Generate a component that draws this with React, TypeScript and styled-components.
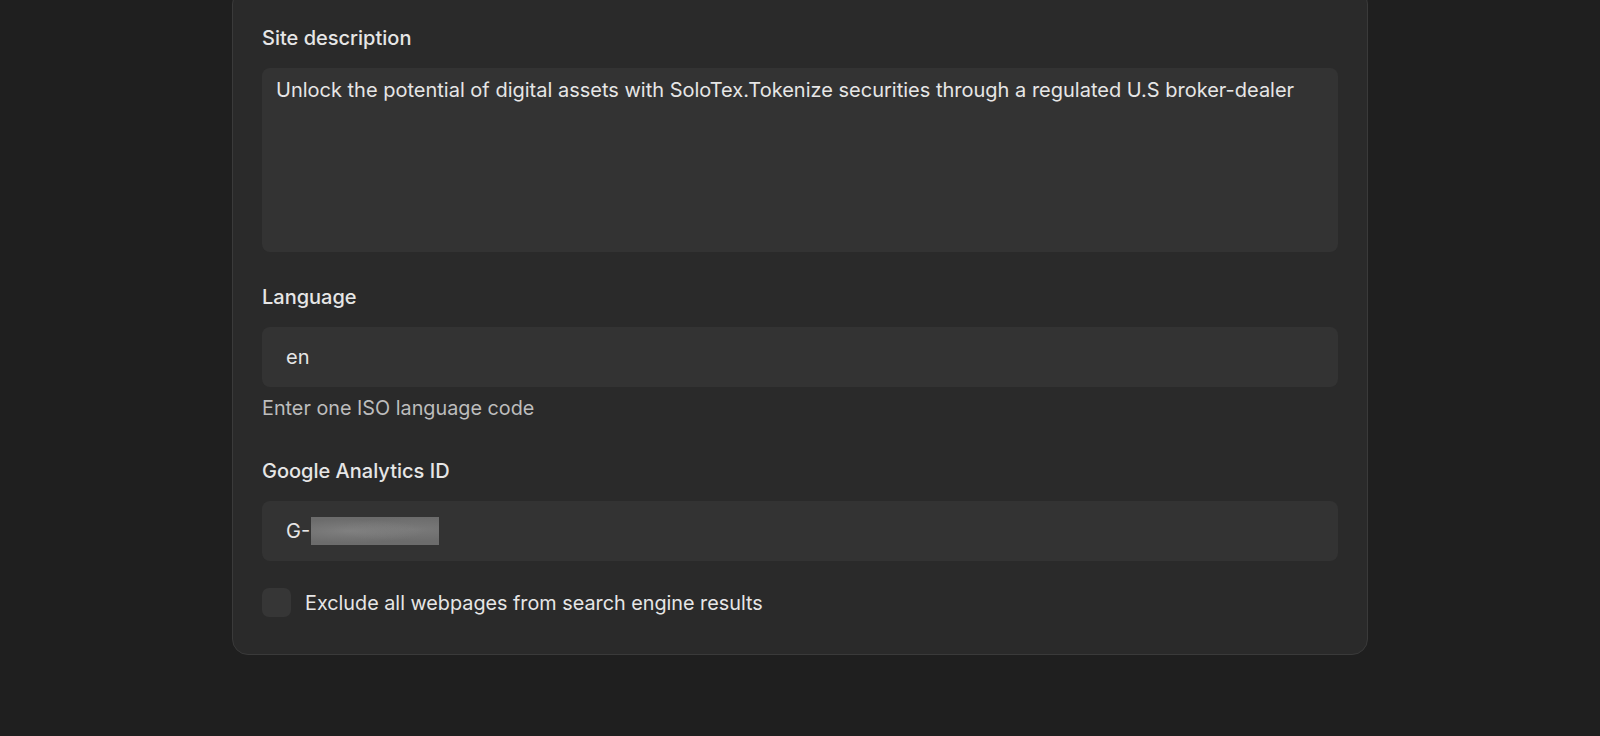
import React from "react";
import styled, { createGlobalStyle } from "styled-components";

const Global = createGlobalStyle`
  html, body {
    margin: 0;
    padding: 0;
    background: #1f1f1f;
    height: 100%;
    overflow: hidden;
  }
  * { box-sizing: border-box; }
`;

const Page = styled.div`
  display: flex;
  justify-content: center;
  min-height: 736px;
  background: #1f1f1f;
  font-family: Inter, "Noto Sans", sans-serif;
  color: #e8e8e8;
`;

const Card = styled.section`
  width: 1136px;
  margin-top: -12px;
  align-self: flex-start;
  background: #2a2a2a;
  border: 1px solid #3a3a3a;
  border-radius: 16px;
  padding: 37px 29px 37px;
  display: flex;
  flex-direction: column;
  gap: 33px;
`;

const Field = styled.div`
  display: flex;
  flex-direction: column;
  gap: 18px;
`;

const Label = styled.label`
  font-size: 20px;
  line-height: 24px;
  font-weight: 500;
  color: #e6e6e6;
`;

const TextArea = styled.textarea`
  width: 100%;
  height: 184px;
  resize: none;
  border: none;
  outline: none;
  border-radius: 8px;
  background: #333333;
  color: #e6e6e6;
  font-family: inherit;
  font-size: 20px;
  line-height: 24px;
  padding: 10px 14px;
`;

const InputBox = styled.div`
  height: 60px;
  border-radius: 8px;
  background: #333333;
  display: flex;
  align-items: center;
  padding: 0 24px;
  font-size: 20px;
  color: #e6e6e6;
`;

const Helper = styled.div`
  margin: -9px 0 6px;
  font-size: 19.8px;
  line-height: 24px;
  color: #bdbdbd;
`;

const Redacted = styled.span`
  display: inline-block;
  width: 128px;
  height: 28px;
  margin-left: 1px;
  background:
    radial-gradient(ellipse at 30% 50%, rgba(140,140,140,0.6), transparent 60%),
    radial-gradient(ellipse at 80% 45%, rgba(135,135,135,0.5), transparent 55%),
    #6c6c6c;
`;

const CheckRow = styled.div`
  display: flex;
  align-items: center;
  gap: 14px;
  margin-top: -6px;
  font-size: 19.8px;
  color: #e6e6e6;
`;

const Box = styled.span`
  width: 29px;
  height: 29px;
  border-radius: 7px;
  background: #363636;
  flex: none;
`;

export default function App() {
  return (
    <>
      <Global />
      <Page>
        <Card>
          <Field>
            <Label>Site description</Label>
            <TextArea
              readOnly
              value="Unlock the potential of digital assets with SoloTex.Tokenize securities through a regulated U.S broker-dealer"
            />
          </Field>
          <Field>
            <Label>Language</Label>
            <InputBox>en</InputBox>
            <Helper>Enter one ISO language code</Helper>
          </Field>
          <Field>
            <Label>Google Analytics ID</Label>
            <InputBox>
              G-<Redacted />
            </InputBox>
          </Field>
          <CheckRow>
            <Box />
            Exclude all webpages from search engine results
          </CheckRow>
        </Card>
      </Page>
    </>
  );
}
